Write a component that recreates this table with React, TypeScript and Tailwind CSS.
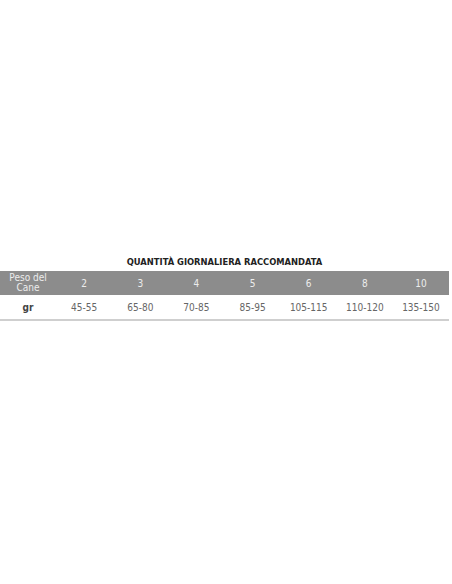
const weights = ['2', '3', '4', '5', '6', '8', '10'];
const grams = ['45-55', '65-80', '70-85', '85-95', '105-115', '110-120', '135-150'];

const font = { fontFamily: '"DejaVu Sans", "Liberation Sans", sans-serif' };

export default function App() {
  return (
    <div className="h-[584px] w-full bg-white pt-[254px] font-stretch-condensed" style={font}>
      <div className="w-[449px]">
        {/* Title */}
        <h2 className="h-[16px] text-center text-[9.3px] font-bold leading-[16px] text-[#222]">
          QUANTITÀ GIORNALIERA RACCOMANDATA
        </h2>

        {/* Table */}
        <div className="mt-[1px] grid h-[24px] grid-cols-8 items-center bg-[#8c8c8c] text-[10px] text-[#ececec]">
          <div className="text-center leading-[10px]">
            Peso del
            <br />
            Cane
          </div>
          {weights.map((w) => (
            <div key={w} className="text-center">
              {w}
            </div>
          ))}
        </div>
        <div className="grid h-[26px] grid-cols-8 items-center border-b-2 border-[#cfcfcf] text-[10px] text-[#666]">
          <div className="text-center font-semibold text-[#444]">gr</div>
          {grams.map((g) => (
            <div key={g} className="text-center">
              {g}
            </div>
          ))}
        </div>
      </div>
    </div>
  );
}
